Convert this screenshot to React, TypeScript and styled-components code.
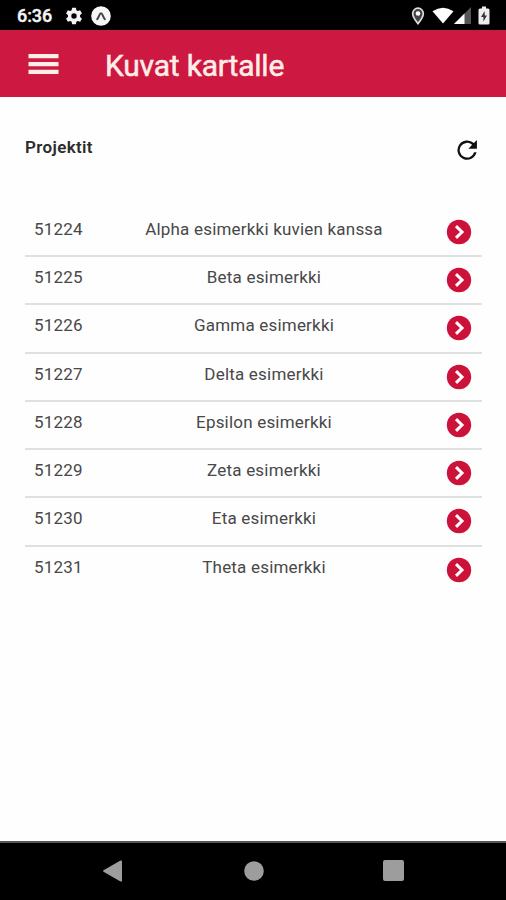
import React from "react";
import styled, { createGlobalStyle } from "styled-components";

const GlobalStyle = createGlobalStyle`
  *, *::before, *::after { box-sizing: border-box; }
  html, body { margin: 0; padding: 0; background: #fff; }
  body { font-family: Roboto, "Liberation Sans", sans-serif; }
  button { border: 0; padding: 0; background: none; font: inherit; color: inherit; }
  svg { display: block; }
`;

const Screen = styled.div`
  display: flex;
  flex-direction: column;
  width: 100%;
  height: 900px;
  background: #fefefe;
  overflow: hidden;
`;

const StatusBar = styled.div`
  display: flex;
  flex: 0 0 30px;
  align-items: center;
  justify-content: space-between;
  padding: 1px 16px 0 17px;
  background: #000;
  color: #f4f4f4;
`;

const StatusGroup = styled.div<{ $gap: number }>`
  display: flex;
  align-items: center;
  gap: ${({ $gap }) => $gap}px;
`;

const Clock = styled.span`
  width: 37px;
  margin-right: 3px;
  font-size: 18px;
  font-weight: 500;
  line-height: 20px;
  letter-spacing: -0.1px;
  white-space: nowrap;
  -webkit-text-stroke: 0.4px currentColor;
`;

const AppBar = styled.header`
  display: flex;
  flex: 0 0 67px;
  align-items: center;
  padding: 0 28px;
  background: #cd1842;
  color: #ffeee8;
`;

const MenuButton = styled.button`
  width: 31px;
  height: 24px;
  margin: 1px 46px 0 0;
`;

const Title = styled.h1`
  margin: 4px 0 0;
  font-size: 30px;
  font-weight: 400;
  line-height: 36px;
  letter-spacing: -0.2px;
  white-space: nowrap;
  -webkit-text-stroke: 0.5px currentColor;
`;

const Content = styled.main`
  display: flex;
  flex: 1;
  flex-direction: column;
  padding: 37px 24px 0 25px;
`;

const SectionHeader = styled.div`
  display: flex;
  justify-content: space-between;
  height: 74.7px;
  padding-right: 1px;
`;

const SectionTitle = styled.h2`
  margin: 3px 0 0;
  color: #2c2c2c;
  font-size: 17px;
  font-weight: 600;
  line-height: 20px;
  letter-spacing: 0.35px;
`;

const RefreshButton = styled.button`
  width: 28px;
  height: 28px;
  margin-top: 2px;
  color: #111;
`;

const ProjectList = styled.ul`
  margin: 0;
  padding: 0;
  list-style: none;
`;

const ProjectRow = styled.li`
  display: grid;
  grid-template-columns: 60px 1fr 38px;
  height: 48.3px;
  padding: 0 10px 0 9px;
  border-bottom: 2px solid #e0e0e0;

  &:last-child { border-bottom-color: transparent; }
`;

const ProjectId = styled.span`
  padding-top: 10px;
  color: #484848;
  font-size: 17px;
  line-height: 20px;
  letter-spacing: 0.2px;
`;

const ProjectName = styled(ProjectId)`
  text-align: center;
  white-space: nowrap;
`;

const OpenButton = styled.button`
  width: 26px;
  height: 26px;
  margin-top: 10px;
  justify-self: end;
`;

const NavBar = styled.nav`
  display: flex;
  flex: 0 0 59px;
  align-items: center;
  justify-content: space-between;
  padding: 0 102px 2px;
  border-top: 2px solid #555;
  background: #000;
  color: #9d9d9d;
`;

const projects = [
  { id: "51224", name: "Alpha esimerkki kuvien kanssa" },
  { id: "51225", name: "Beta esimerkki" },
  { id: "51226", name: "Gamma esimerkki" },
  { id: "51227", name: "Delta esimerkki" },
  { id: "51228", name: "Epsilon esimerkki" },
  { id: "51229", name: "Zeta esimerkki" },
  { id: "51230", name: "Eta esimerkki" },
  { id: "51231", name: "Theta esimerkki" },
];

const GearIcon = () => (
  <svg width="18" height="18" viewBox="0 0 24 24" fill="currentColor">
    <path fillRule="evenodd" d="M9.5 1h5l.7 3.3 1.7 1 3.2-1.1 2.5 4.3-2.5 2.2v2.6l2.5 2.2-2.5 4.3-3.2-1.1-1.7 1-.7 3.3h-5l-.7-3.3-1.7-1-3.2 1.1-2.5-4.3 2.5-2.2v-2.6L1.4 8.500l2.500-4.300 3.200 1.100 1.700-1zM12 8.400a3.600 3.600 0 1 0 0 7.200 3.600 3.600 0 0 0 0-7.200z" />
  </svg>
);

const ExpoIcon = () => (
  <svg width="20" height="20" viewBox="0 0 20 20">
    <circle cx="10" cy="10" r="9.8" fill="#f7f7f7" />
    <path d="M6.200 13.200C7.900 11.200 8.500 7.300 10 7.300S12.100 11.200 13.800 13.200" fill="none" stroke="#444" strokeWidth="2" strokeLinecap="round" />
  </svg>
);

const LocationIcon = () => (
  <svg width="14" height="18" viewBox="0 0 14 18">
    <path d="M7 1.200a5.300 5.300 0 0 0-5.300 5.300C1.700 10.300 7 16.600 7 16.600s5.300-6.300 5.300-10.100A5.300 5.300 0 0 0 7 1.200z" fill="#444" stroke="#ddd" strokeWidth="1.700" />
    <circle cx="7" cy="6.500" r="2.300" fill="#fff" />
  </svg>
);

const WifiIcon = () => (
  <svg width="22" height="17" viewBox="0 0 22 17">
    <path d="M.5 4.300Q11-2.800 21.500 4.300L11 16.500z" fill="#fff" />
  </svg>
);

const SignalIcon = () => (
  <svg width="17" height="17" viewBox="0 0 17 17">
    <path d="M0 17 17 0v17z" fill="#555" />
    <path d="M0 17 10.500 6.500V17z" fill="#fff" />
  </svg>
);

const BatteryIcon = () => (
  <svg width="12" height="19" viewBox="0 0 12 19">
    <path d="M4 .5h4v2h2q1.500 0 1.500 1.500v13q0 1.500-1.500 1.500H2Q.5 18.500.5 17V4Q.5 2.500 2 2.500h2z" fill="#eee" />
    <path d="M6.700 5 3 11h2.400v4.500L9 9.500H6.700z" fill="#333" />
  </svg>
);

const MenuIcon = () => (
  <svg width="31" height="24" viewBox="0 0 31 24" fill="currentColor">
    <rect x=".5" y="2" width="30" height="4.300" rx=".5" />
    <rect x=".5" y="9.900" width="30" height="4.300" rx=".5" />
    <rect x=".5" y="17.800" width="30" height="4.300" rx=".5" />
  </svg>
);

const RefreshIcon = () => (
  <svg width="28" height="28" viewBox="0 0 24 24" fill="currentColor">
    <path d="M17.900 6.100A8.300 8.300 0 1 0 20.200 14h-2.100A6.300 6.300 0 1 1 16.400 7.600L13.200 10.900H20.500V3.500z" />
  </svg>
);

const ArrowIcon = () => (
  <svg width="26" height="26" viewBox="0 0 26 26">
    <circle cx="13" cy="13" r="12.200" fill="#cc1238" />
    <path d="m10 7.200 6 5.800-6 5.800" fill="none" stroke="#fff" strokeWidth="3" />
  </svg>
);

export default function App() {
  return (
    <>
      <GlobalStyle />
      <Screen>
        <StatusBar>
          <StatusGroup $gap={8}>
            <Clock>6:36</Clock>
            <GearIcon />
            <ExpoIcon />
          </StatusGroup>
          <StatusGroup $gap={0}>
            <StatusGroup $gap={7}>
              <LocationIcon />
              <WifiIcon />
            </StatusGroup>
            <StatusGroup $gap={7}>
              <SignalIcon />
              <BatteryIcon />
            </StatusGroup>
          </StatusGroup>
        </StatusBar>
        <AppBar>
          <MenuButton><MenuIcon /></MenuButton>
          <Title>Kuvat kartalle</Title>
        </AppBar>
        <Content>
          <SectionHeader>
            <SectionTitle>Projektit</SectionTitle>
            <RefreshButton><RefreshIcon /></RefreshButton>
          </SectionHeader>
          <ProjectList>
            {projects.map((project) => (
              <ProjectRow key={project.id}>
                <ProjectId>{project.id}</ProjectId>
                <ProjectName>{project.name}</ProjectName>
                <OpenButton><ArrowIcon /></OpenButton>
              </ProjectRow>
            ))}
          </ProjectList>
        </Content>
        <NavBar>
          <svg width="22" height="24" viewBox="0 0 22 24" fill="currentColor">
            <path d="M1.500 11.300 18.500 1.600q1.500-.7 1.500 1v18.800q0 1.700-1.500 1L1.500 12.700q-1-.7 0-1.400z" />
          </svg>
          <svg width="20" height="20" viewBox="0 0 20 20" fill="currentColor">
            <circle cx="10" cy="10" r="9.800" />
          </svg>
          <svg width="21" height="21" viewBox="0 0 21 21" fill="currentColor">
            <rect width="21" height="21" rx="2" />
          </svg>
        </NavBar>
      </Screen>
    </>
  );
}
